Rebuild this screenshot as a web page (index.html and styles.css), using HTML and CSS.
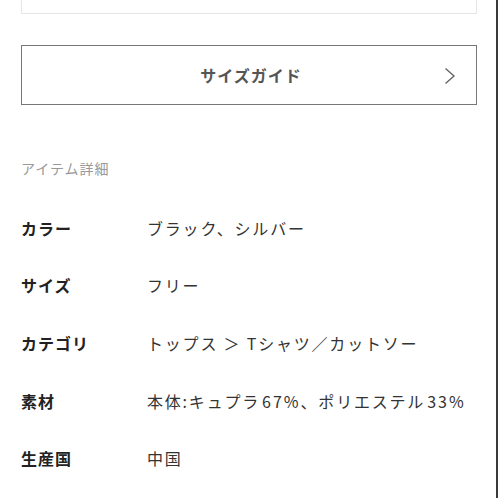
FILE: index.html
```html
<!DOCTYPE html>
<html lang="ja">
<head>
<meta charset="utf-8">
<link rel="stylesheet" href="styles.css">
</head>
<body>
<div class="page">
  <div class="top-box"></div>
  <a class="guide-btn">
    <span class="guide-label">サイズガイド</span>
    <svg class="chev" width="12" height="18" viewBox="0 0 12 18"><path d="M1.5 1.5 L10 9 L1.5 16.5" fill="none" stroke="#666" stroke-width="1.4"/></svg>
  </a>
  <h2 class="section-title">アイテム詳細</h2>
  <dl class="details">
    <div class="row"><dt>カラー</dt><dd>ブラック、シルバー</dd></div>
    <div class="row"><dt>サイズ</dt><dd>フリー</dd></div>
    <div class="row"><dt>カテゴリ</dt><dd>トップス ＞ Tシャツ／カットソー</dd></div>
    <div class="row"><dt>素材</dt><dd>本体:キュプラ<span class="num">67%</span>、ポリエステル<span class="num">33%</span></dd></div>
    <div class="row"><dt>生産国</dt><dd>中国</dd></div>
  </dl>
</div>
</body>
</html>
```
FILE: styles.css
```css
html, body {
  margin: 0;
  padding: 0;
  background: #fff;
}
body {
  font-family: "Noto Sans CJK JP", "Noto Sans", sans-serif;
  color: #222;
}
.page {
  box-sizing: border-box;
  width: 498px;
  min-height: 498px;
  border-right: 2px solid #3a3a3a;
  padding: 0 20px 0 21px;
  overflow: hidden;
}
.top-box {
  height: 13px;
  border: 1px solid #e6e6e6;
  border-top: none;
  margin-right: -1px;
}
.guide-btn {
  display: flex;
  align-items: center;
  justify-content: center;
  position: relative;
  margin-top: 31px;
  height: 60px;
  box-sizing: border-box;
  border: 1.5px solid #777;
  margin-right: -1px;
}
.guide-label {
  font-size: 16px;
  font-weight: 700;
  letter-spacing: 1px;
  color: #555;
  margin-left: 4px;
}
.chev {
  position: absolute;
  right: 20px;
  top: 21px;
}
.section-title {
  margin: 53px 0 0;
  font-size: 14px;
  font-weight: 400;
  letter-spacing: 1px;
  color: #999;
  line-height: 20px;
}
.details {
  margin: 21px 0 0;
}
.row {
  display: flex;
  align-items: center;
  height: 57.6px;
}
.row dt {
  width: 126px;
  font-size: 16px;
  font-weight: 700;
  letter-spacing: 1px;
  color: #222;
}
.row dd {
  margin: 0;
  font-size: 16px;
  letter-spacing: 1.8px;
  color: #333;
}
.num {
  margin-left: 2px;
  letter-spacing: 2px;
}
```
